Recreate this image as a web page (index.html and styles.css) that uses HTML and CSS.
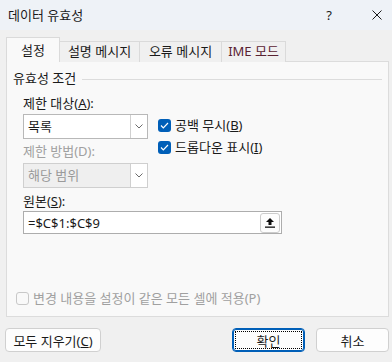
FILE: index.html
```html
<!DOCTYPE html>
<html lang="ko">
<head>
  <meta charset="UTF-8" />
  <title>데이터 유효성</title>
  <link rel="stylesheet" href="styles.css">
</head>
<body>
  <div class="titlebar">
    <span class="title">데이터 유효성</span>
    <span class="help">?</span>
    <svg class="close" width="10" height="10" viewBox="0 0 10 10">
      <path d="M0.5 0.5 L9.5 9.5 M9.5 0.5 L0.5 9.5" stroke="#1a1a1a" stroke-width="1" fill="none"/>
    </svg>
  </div>
  <div class="dialog">
    <div class="tabs">
      <div class="tab active">설정</div>
      <div class="tab tab-msg">설명 메시지</div>
      <div class="tab tab-err">오류 메시지</div>
      <div class="tab tab-ime">IME 모드</div>
    </div>
    <div class="panel">
      <div class="legend">
        <span>유효성 조건</span>
        <div class="legend-line"></div>
      </div>
      <div class="criteria">
        <div class="left-col">
          <div class="label">제한 대상(<u>A</u>):</div>
          <div class="combo">
            <div class="combo-value">목록</div>
            <div class="combo-arrow">
              <svg width="8" height="5" viewBox="0 0 8 5"><path d="M0.5 0.5 L4 4 L7.5 0.5" stroke="#6b6b6b" fill="none"/></svg>
            </div>
          </div>
          <div class="label disabled">제한 방법(D):</div>
          <div class="combo combo-disabled">
            <div class="combo-value">해당 범위</div>
            <div class="combo-arrow">
              <svg width="8" height="5" viewBox="0 0 8 5"><path d="M0.5 0.5 L4 4 L7.5 0.5" stroke="#6b6b6b" fill="none"/></svg>
            </div>
          </div>
        </div>
        <div class="right-col">
          <label class="check">
            <span class="box checked">
              <svg width="9" height="7" viewBox="0 0 9 7"><path d="M1 3.5 L3.3 5.8 L8 1" stroke="#fff" stroke-width="1.2" fill="none"/></svg>
            </span>
            <span>공백 무시(<u>B</u>)</span>
          </label>
          <label class="check">
            <span class="box checked">
              <svg width="9" height="7" viewBox="0 0 9 7"><path d="M1 3.5 L3.3 5.8 L8 1" stroke="#fff" stroke-width="1.2" fill="none"/></svg>
            </span>
            <span>드롭다운 표시(<u>I</u>)</span>
          </label>
        </div>
      </div>
      <div class="source">
        <div class="label">원본(<u>S</u>):</div>
        <div class="input">
          <span class="input-value">=$C$1:$C$9</span>
          <span class="pick-btn">
            <svg width="10" height="11" viewBox="0 0 10 11"><path d="M5 1 L1 5 L3.5 5 L3.5 8 L6.5 8 L6.5 5 L9 5 Z" fill="#111"/><rect x="0" y="9.5" width="10" height="1.3" fill="#111"/></svg>
          </span>
        </div>
      </div>
      <label class="apply-all">
        <span class="box disabled-box"></span>
        <span>변경 내용을 설정이 같은 모든 셀에 적용(P)</span>
      </label>
    </div>
    <div class="buttons">
      <button class="btn btn-clear">모두 지우기(<u>C</u>)</button>
      <div class="spacer"></div>
      <button class="btn btn-ok"><span class="focus">확인</span></button>
      <button class="btn btn-cancel">취소</button>
    </div>
  </div>
</body>
</html>
```

FILE: styles.css
```css
* { box-sizing: border-box; margin: 0; padding: 0; }
body {
  width: 392px;
  height: 362px;
  overflow: hidden;
  background: #f0f0f0;
  font-family: "Noto Sans", "Noto Sans CJK KR", sans-serif;
  font-size: 13px;
  color: #1a1a1a;
}
u { text-decoration: underline; text-underline-offset: 1px; }
.titlebar {
  height: 30px;
  background: #eef2f7;
  display: flex;
  align-items: center;
  padding-left: 8px;
}
.title { flex: 1; line-height: 16px; }
.help {
  font-size: 13px;
  margin-right: 40px;
}
.close { margin-right: 10px; }
.dialog { padding: 7px 3px 0 6px; }
.tabs {
  display: flex;
  align-items: flex-end;
  height: 25px;
  position: relative;
  z-index: 1;
}
.tab {
  height: 21px;
  line-height: 19px;
  text-align: center;
  border: 1px solid #dadada;
  border-bottom: none;
  border-left: none;
  background: #f0f0f0;
}
.tab.active {
  width: 54px;
  height: 25px;
  line-height: 24px;
  border-left: 1px solid #dadada;
  background: #f9f9f9;
}
.tab-msg { width: 80px; }
.tab-err { width: 82px; }
.tab-ime { width: 64px; color: #5a2232; }
.panel {
  margin-top: -1px;
  height: 256px;
  background: #f9f9f9;
  border: 1px solid #dcdcdc;
  padding: 8px 0 0 6px;
}
.legend {
  display: flex;
  align-items: center;
  line-height: 16px;
}
.legend-line {
  flex: 1;
  height: 1px;
  background: #dcdcdc;
  margin: 2px 6px 0 6px;
}
.criteria {
  display: flex;
  padding-left: 10px;
  margin-top: 9px;
}
.left-col { width: 125px; }
.label { line-height: 16px; }
.label.disabled { color: #a0a0a0; }
.combo {
  display: flex;
  height: 25px;
  margin-top: 3px;
  border: 1px solid #b8b8b8;
  background: #fff;
}
.combo-value {
  flex: 1;
  padding-left: 4px;
  line-height: 22px;
}
.combo-arrow {
  width: 17px;
  border-left: 1px solid #d0d0d0;
  display: flex;
  align-items: center;
  justify-content: center;
  background: #fff;
}
.combo + .label { margin-top: 4px; }
.combo-disabled {
  margin-top: 4px;
  border-color: #cfcfcf;
  background: #efefef;
}
.combo-disabled .combo-value { color: #9a9a9a; }
.right-col {
  margin-left: 10px;
  padding-top: 22px;
  display: flex;
  flex-direction: column;
  gap: 6px;
}
.check {
  display: flex;
  align-items: center;
  gap: 4px;
  line-height: 16px;
}
.box {
  width: 13px;
  height: 13px;
  border-radius: 3px;
  display: flex;
  align-items: center;
  justify-content: center;
}
.box.checked { background: #005fb8; }
.source { padding-left: 10px; margin-top: 5px; }
.input {
  width: 259px;
  height: 23px;
  margin-top: 2px;
  border: 1px solid #adadad;
  background: #fff;
  display: flex;
  align-items: center;
  padding: 0 1px 0 4px;
}
.input-value { flex: 1; line-height: 16px; }
.pick-btn {
  width: 20px;
  height: 20px;
  border: 1px solid #cccccc;
  border-radius: 3px;
  background: #fdfdfd;
  display: flex;
  align-items: center;
  justify-content: center;
}
.apply-all {
  display: flex;
  align-items: center;
  gap: 4px;
  margin: 56px 0 0 3px;
  color: #a0a0a0;
  line-height: 16px;
}
.disabled-box {
  border: 1px solid #c8c8c8;
  background: #f9f9f9;
}
.buttons {
  display: flex;
  margin-top: 11px;
  gap: 11px;
}
.spacer { flex: 1; }
.btn {
  height: 24px;
  font-family: inherit;
  font-size: 13px;
  color: #1a1a1a;
  background: #fdfdfd;
  border: 1px solid #d0d0d0;
  border-radius: 4px;
}
.btn-clear { width: 96px; margin-left: -1px; }
.btn-ok {
  width: 73px;
  border: 1px solid #005fb8;
  box-shadow: inset 0 0 0 1px #005fb8;
  padding: 2px;
}
.focus {
  display: flex;
  align-items: center;
  justify-content: center;
  width: 100%;
  height: 100%;
  border: 1px dotted #000;
}
.btn-cancel { width: 73px; }
```
